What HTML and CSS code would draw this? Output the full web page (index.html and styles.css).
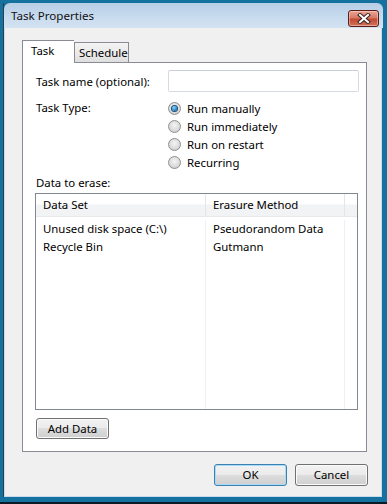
FILE: index.html
```html
<!DOCTYPE html>
<html lang="en">
<head>
    <meta charset="UTF-8">
    <title>Task Properties</title>
    <link rel="stylesheet" href="styles.css">
</head>
<body>
    <!-- 窗口 -->
    <div class="window">
        <div class="titlebar">
            <span class="title">Task Properties</span>
            <div class="close-btn">
                <svg width="14" height="11" viewBox="0 0 14 11">
                    <path d="M3 2 L11 9 M11 2 L3 9" stroke="#3a2424" stroke-width="4" stroke-linecap="square"/>
                    <path d="M3 2 L11 9 M11 2 L3 9" stroke="#ffffff" stroke-width="2" stroke-linecap="square"/>
                </svg>
            </div>
        </div>

        <div class="client">
            <!-- 选项卡 -->
            <div class="tabs">
                <div class="tab active">Task</div>
                <div class="tab">Schedule</div>
            </div>

            <div class="panel">
                <div class="name-row">
                    <span class="field-label">Task name (optional):</span>
                    <div class="text-input"></div>
                </div>

                <div class="type-row">
                    <span class="field-label">Task Type:</span>
                    <div class="radios">
                        <div class="radio-row"><span class="radio checked"></span>Run manually</div>
                        <div class="radio-row"><span class="radio"></span>Run immediately</div>
                        <div class="radio-row"><span class="radio"></span>Run on restart</div>
                        <div class="radio-row"><span class="radio"></span>Recurring</div>
                    </div>
                </div>

                <div class="data-label">Data to erase:</div>

                <div class="list">
                    <div class="list-head">
                        <div class="head-cell">Data Set</div>
                        <div class="head-cell">Erasure Method</div>
                        <div class="head-cell"></div>
                    </div>
                    <div class="list-body">
                        <div class="col">
                            <div class="cell">Unused disk space (C:\)</div>
                            <div class="cell">Recycle Bin</div>
                        </div>
                        <div class="col">
                            <div class="cell">Pseudorandom Data</div>
                            <div class="cell">Gutmann</div>
                        </div>
                        <div class="col last"></div>
                    </div>
                </div>

                <div class="btn add-btn">Add Data</div>
            </div>

            <!-- 底部按钮 -->
            <div class="footer">
                <div class="btn default">OK</div>
                <div class="btn">Cancel</div>
            </div>
        </div>
    </div>
</body>
</html>
```

FILE: styles.css
```css
/* 基础样式 */
* {
    margin: 0;
    padding: 0;
    box-sizing: border-box;
}

html {
    background-color: #15729e;
}

body {
    width: 387px;
    height: 504px;
    overflow: hidden;
    font-family: 'Noto Sans', 'Open Sans', sans-serif;
    font-size: 11.4px;
    color: #000;
    border-bottom: 2px solid #0b1a24;
}

/* 窗口外框 */
.window {
    margin: 3px 0 0 3px;
    width: 380px;
    border-left: 1px solid #2a3e4c;
}

.titlebar {
    height: 25px;
    display: flex;
    align-items: center;
    justify-content: space-between;
    padding: 0 4px 0 7px;
    background: linear-gradient(#b7cee6, #c9dcef 60%, #d2e2f1);
    border-radius: 6px 6px 0 0;
}

.title {
    font-size: 11.6px;
    color: #111;
    padding-bottom: 1px;
}

.close-btn {
    width: 31px;
    height: 17px;
    margin-top: 5px;
    border: 1px solid #5a1c18;
    border-radius: 3px;
    background: linear-gradient(#e9a696, #d77a66 45%, #c24a33 55%, #d1735b);
    box-shadow: inset 0 0 0 1px rgba(255, 220, 210, 0.5);
    display: flex;
    align-items: center;
    justify-content: center;
}

/* 客户区 */
.client {
    height: 469px;
    width: 378px;
    background-color: #f0f0f0;
    border-left: 1px solid #c8dbee;
    border-right: 1px solid #c8dbee;
    border-bottom: 1px solid #c8dbee;
    padding: 12px 14px 0 17px;
}

.tabs {
    display: flex;
    align-items: flex-end;
    height: 22px;
}

.tab {
    height: 20px;
    padding: 0 0 0 4px;
    border: 1px solid #898c95;
    border-bottom: none;
    background: linear-gradient(#f3f3f3, #ebebeb 50%, #dedede);
    line-height: 19px;
    width: 55px;
}

.tab.active {
    width: 52px;
    height: 23px;
    margin-bottom: -1px;
    padding-left: 8px;
    line-height: 20px;
    background: #fff;
    border-right: none;
    position: relative;
}

.panel {
    width: 345px;
    height: 390px;
    border: 1px solid #898c95;
    background-color: #fff;
    padding: 7px 7px 0 13px;
}

.name-row {
    display: flex;
    align-items: center;
    height: 22px;
}

.field-label {
    width: 132px;
    flex-shrink: 0;
}

.text-input {
    width: 191px;
    height: 22px;
    border: 1px solid #d5dae3;
    border-top-color: #c9ced8;
    border-radius: 2px;
}

.type-row {
    display: flex;
    margin-top: 7px;
}

.type-row .field-label {
    line-height: 18px;
}

.radio-row {
    height: 18px;
    display: flex;
    align-items: center;
}

.radio {
    width: 13px;
    height: 13px;
    border-radius: 50%;
    border: 1px solid #8e8f8f;
    background: radial-gradient(circle at 50% 40%, #f4f4f4 0, #dcdcdc 55%, #c4c4c4 100%);
    margin-right: 6px;
    flex-shrink: 0;
    display: flex;
    align-items: center;
    justify-content: center;
}

.radio.checked::after {
    content: "";
    width: 5px;
    height: 5px;
    border-radius: 50%;
    background: radial-gradient(circle at 40% 35%, #8fdcff 0, #2a8ad0 55%, #0c4a80 100%);
    box-shadow: 0 0 0 1px #1d4f77;
}

.data-label {
    margin-top: 4px;
    line-height: 16px;
}

/* 列表 */
.list {
    margin: 2px 0 0 -1px;
    width: 323px;
    height: 217px;
    border: 1px solid #828790;
    display: flex;
    flex-direction: column;
}

.list-head {
    display: grid;
    grid-template-columns: 170px 139px 1fr;
    height: 23px;
    background: linear-gradient(#ffffff, #ffffff 45%, #f2f3f5 50%, #f2f3f5);
    border-bottom: 1px solid #e6e8eb;
}

.head-cell {
    padding-left: 7px;
    line-height: 22px;
    border-right: 1px solid #e4e6e9;
}

.head-cell:last-child {
    border-right: none;
}

.list-body {
    flex: 1;
    display: grid;
    grid-template-columns: 170px 139px 1fr;
    padding-top: 3px;
}

.col {
    border-right: 1px solid #edf1f7;
}

.col.last {
    border-right: none;
}

.cell {
    height: 18px;
    line-height: 18px;
    padding-left: 7px;
    white-space: nowrap;
}

/* 按钮 */
.btn {
    width: 73px;
    height: 21px;
    border: 1px solid #707070;
    border-radius: 3px;
    background: linear-gradient(#f2f2f2, #ebebeb 50%, #dddddd 50%, #cfcfcf);
    box-shadow: inset 0 0 0 1px #fbfbfb;
    text-align: center;
    line-height: 19px;
}

.add-btn {
    margin-top: 8px;
}

.footer {
    display: flex;
    justify-content: flex-end;
    gap: 8px;
    margin: 12px -1px 0 0;
}

.footer .btn {
    height: 22px;
    line-height: 20px;
}

.btn.default {
    border-color: #3c7fb1;
    box-shadow: inset 0 0 0 1px #a6dcf7;
}
```
